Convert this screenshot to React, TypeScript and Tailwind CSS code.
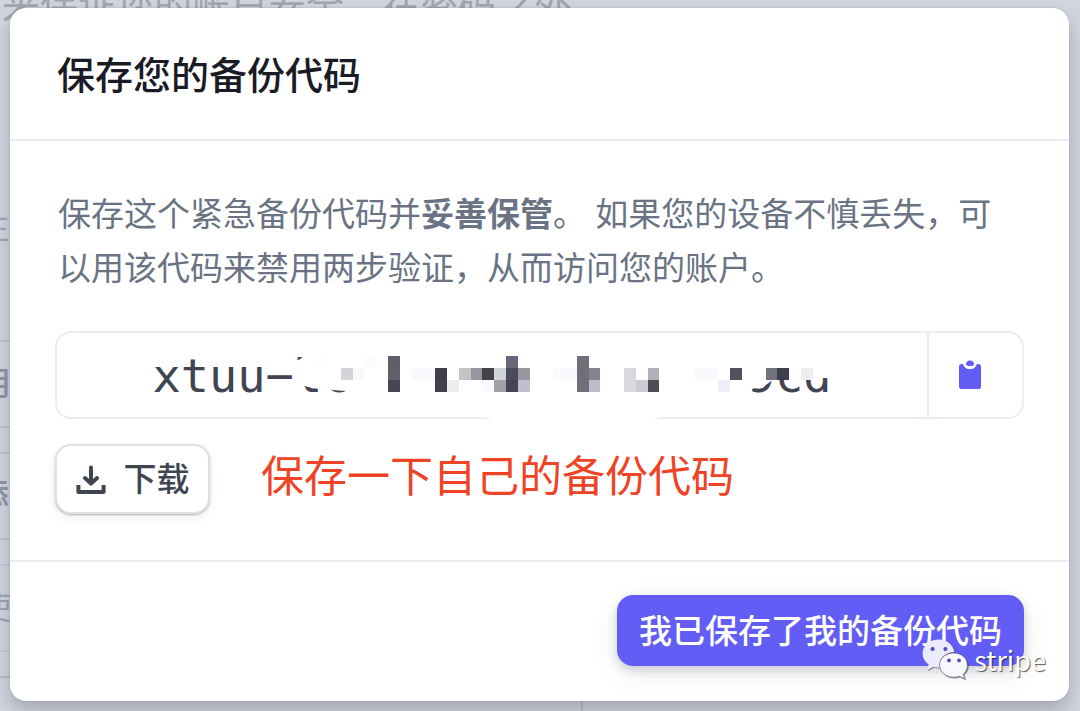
import { useState } from "react";

interface Cell {
  col: number;
  row: number;
  color: string;
}

const CELL = 11.8;

// Pixelated blocks that hide the middle of the code
const cells: Cell[] = [
  { col: -6, row: 0, color: "#fefefa" },
  { col: -4, row: 1, color: "#d3d4d8" },
  { col: -3, row: 1, color: "#fafafd" },
  { col: -2, row: 0, color: "#fafbfe" },
  { col: 0, row: 0, color: "#5f5e69" },
  { col: 0, row: 1, color: "#605f6a" },
  { col: 0, row: 2, color: "#474753" },
  { col: 2, row: 1, color: "#f9f9fe" },
  { col: 3, row: 1, color: "#f9f9fe" },
  { col: 4, row: 1, color: "#40404c" },
  { col: 4, row: 2, color: "#41414e" },
  { col: 5, row: 2, color: "#ededf0" },
  { col: 6, row: 1, color: "#c4c4c6" },
  { col: 7, row: 1, color: "#97959f" },
  { col: 8, row: 1, color: "#424248" },
  { col: 8, row: 2, color: "#f9f9fe" },
  { col: 9, row: 1, color: "#d3d4d7" },
  { col: 9, row: 2, color: "#a2a2a6" },
  { col: 10, row: 0, color: "#656878" },
  { col: 10, row: 1, color: "#4a4c5d" },
  { col: 10, row: 2, color: "#424555" },
  { col: 11, row: 1, color: "#9897a1" },
  { col: 11, row: 2, color: "#c0bfcb" },
  { col: 14, row: 1, color: "#f9fafe" },
  { col: 15, row: 1, color: "#f9fafe" },
  { col: 16, row: 0, color: "#706e79" },
  { col: 16, row: 1, color: "#706e79" },
  { col: 16, row: 2, color: "#706e79" },
  { col: 17, row: 1, color: "#85838f" },
  { col: 17, row: 2, color: "#bdbcc8" },
  { col: 20, row: 1, color: "#d8d9dd" },
  { col: 20, row: 2, color: "#d9d9de" },
  { col: 21, row: 2, color: "#cccbd4" },
  { col: 22, row: 1, color: "#b0b0b9" },
  { col: 22, row: 2, color: "#4f4e58" },
  { col: 26, row: 1, color: "#f8f8fd" },
  { col: 27, row: 1, color: "#f8f8fd" },
  { col: 28, row: 2, color: "#f0edf9" },
  { col: 29, row: 1, color: "#51515b" },
  { col: 32, row: 1, color: "#72737b" },
  { col: 33, row: 1, color: "#3d404c" },
  { col: 35, row: 1, color: "#edeef0" },
];

function CodeMask() {
  return (
    <svg
      aria-hidden="true"
      viewBox="0 0 700 90"
      className="pointer-events-none absolute top-0 left-1/2 h-[90px] w-[700px] -translate-x-1/2"
    >
      <path
        d="M154 30 Q160 23 172 17 H692 V45 H632 Q624 55 608 56 L560 78 Q520 82 500 89 H362 Q345 84 325 81 L250 64 Q215 61 205 58 Q188 57 166 54 L154 50Z"
        fill="#fff"
      />
      {cells.map((c) => (
        <rect
          key={`${c.col}:${c.row}`}
          x={246 + c.col * CELL}
          y={23 + c.row * 12}
          width={CELL}
          height={12}
          fill={c.color}
          shapeRendering="crispEdges"
        />
      ))}
    </svg>
  );
}

function ClipboardIcon() {
  return (
    <svg aria-hidden="true" viewBox="0 0 22 30" className="h-[30px] w-[22px]" fill="#625df5">
      <path d="M2.6 4 H3.2 C4.2 4 4.4 4.6 4.8 5.6 C5.6 8 8 9.2 11 9.2 C14 9.2 16.4 8 17.2 5.6 C17.6 4.6 17.8 4 18.8 4 H19.4 C21 4 22 5 22 6.6 V26.4 C22 28 21 29 19.4 29 H2.6 C1 29 0 28 0 26.4 V6.6 C0 5 1 4 2.6 4Z" />
      <path d="M11 0.4 C13.6 0.4 15 2.2 15 4 C15 5.4 13.6 6 11 6 C8.4 6 7 5.4 7 4 C7 2.2 8.4 0.4 11 0.4Z" />
    </svg>
  );
}

function DownloadIcon() {
  return (
    <svg aria-hidden="true" viewBox="0 0 30 30" className="size-[30px]" fill="none" stroke="#414552" strokeWidth="4" strokeLinejoin="round">
      <path d="M15 2.6 V17" strokeLinecap="round" />
      <path d="M9 13 L15 18.6 L21 13" strokeLinecap="round" />
      <path d="M2.4 20 V27 H27.6 V20" />
    </svg>
  );
}

function WeChatIcon() {
  return (
    <svg
      aria-hidden="true"
      viewBox="0 0 46 41"
      className="h-[41px] w-[46px] drop-shadow-[1px_1px_0px_rgba(0,0,0,0.4)]"
    >
      <path
        d="M17 0.6 C7.6 0.6 0.6 6.8 0.6 14.6 C0.6 19 2.8 22.8 6.6 25.4 L5 31.2 L11.4 27.8 C13.6 28.4 15.4 28.6 18.2 28.4 C16 20 23 13 32.6 13.2 C31 5.6 24.8 0.6 17 0.6Z"
        fill="#ecebfd"
      />
      <path
        d="M31.6 14 C23.6 14 17.6 19.4 17.6 26 C17.6 32.8 23.6 38.2 31.6 38.2 C33.6 38.2 35.6 37.8 37.2 37.2 L42.6 39.8 L41.2 35.2 C44 33 45.4 29.6 45.4 26 C45.4 19.4 39.6 14 31.6 14Z"
        fill="#f8f8ff"
        stroke="#55546b"
        strokeWidth="0.6"
      />
      <g fill="#4e4cb5">
        <circle cx="10.6" cy="10" r="2.1" />
        <circle cx="23.4" cy="10" r="2.1" />
        <circle cx="27" cy="21.4" r="1.9" />
        <circle cx="37" cy="21.4" r="1.9" />
      </g>
    </svg>
  );
}

// Dimmed settings page that stays visible round the edges of the dialog
function Backdrop() {
  return (
    <div
      aria-hidden="true"
      className="absolute inset-0 flex flex-col overflow-hidden bg-[#d3d6df] text-[33px] leading-[36px] text-[#a1a6b1]"
    >
      <div className="-mt-6 -ml-9 h-[234px] shrink-0 text-[38px] leading-[60px] whitespace-nowrap">
        <p>录来保证您的账户安全，在密码之外</p>
        <p>次</p>
      </div>
      <p className="-ml-6 h-[130px] shrink-0">注</p>
      <div className="flex w-[54%] flex-col gap-6 font-medium text-[#8f95a1]">
        <div className="flex h-[88px] items-center border-y-2 border-[#bfc3cc]">
          <span className="-ml-[22px]">用</span>
        </div>
        <div className="flex h-[88px] items-center border-y-2 border-[#bfc3cc]">
          <span className="-ml-6">添</span>
        </div>
        <div className="flex h-[88px] items-center border-y-2 border-[#c6c9d2] font-normal text-[#a1a6b1]">
          <span className="-ml-[22px]">使</span>
        </div>
        <div className="h-9 border-t-2 border-r-2 border-[#b9bdc6]" />
      </div>
    </div>
  );
}

export default function App() {
  const [code] = useState("xtuu−lc".padEnd(21, " ") + "9cd");

  return (
    <main className="relative min-h-screen pt-2 pr-[11px] pb-[10px] pl-[10px] font-['Liberation_Sans','Noto_Sans_CJK_SC',sans-serif]">
      <Backdrop />

      <section
        role="dialog"
        aria-labelledby="dialog-title"
        className="relative rounded-2xl bg-white shadow-[0_10px_20px_rgba(60,66,87,0.3),0_0_2px_rgba(60,66,87,0.25)]"
      >
        <header className="border-b-2 border-[#ebeef1] px-[47px] pt-[41px] pb-9">
          <h1 id="dialog-title" className="text-[38px] leading-[54px] font-medium text-[#1a1b25]">
            保存您的备份代码
          </h1>
        </header>

        <div className="px-[45px] pt-[47px] pb-[46px]">
          <p className="pr-3 pl-[3px] text-[33px] leading-[54px] text-[#6a7383]">
            保存这个紧急备份代码并<strong className="font-bold">妥善保管</strong>。 如果您的设备不慎丢失，可以用该代码来禁用两步验证，从而访问您的账户。
          </p>

          <div className="mt-[35px] flex h-[88px] rounded-2xl border-2 border-[#ebeef1]">
            <div className="relative min-w-0 flex-1">
              <input
                readOnly
                aria-label="备份代码"
                value={code}
                className="h-full w-full bg-transparent text-center font-['DejaVu_Sans_Mono',monospace] text-[47px] text-[#414552] outline-none"
              />
              <CodeMask />
            </div>
            <button
              aria-label="复制"
              onClick={() => navigator.clipboard?.writeText(code)}
              className="flex w-[95px] items-center justify-center border-l-2 border-[#ebeef1] pr-3"
            >
              <ClipboardIcon />
            </button>
          </div>

          <div className="mt-[25px] flex gap-[51px]">
            <button className="flex h-[70px] w-[155px] items-center justify-center gap-[18px] rounded-2xl bg-white pt-0.5 text-[33px] leading-[36px] font-medium text-[#414552] shadow-[0_0_0_2px_rgba(0,0,0,0.12)_inset,0_1px_2px_rgba(0,0,0,0.25),0_4px_10px_rgba(60,66,87,0.08)]">
              <DownloadIcon />
              下载
            </button>
            <p className="text-[43px] leading-[66px] text-[#ee4325]">保存一下自己的备份代码</p>
          </div>
        </div>

        <footer className="flex justify-end border-t-2 border-[#ebeef1] px-[45px] pt-[33px] pb-[35px]">
          <button className="h-[71px] rounded-2xl bg-[#625df5] px-[22px] pt-0.5 text-[33px] leading-[36px] font-medium text-white shadow-[0_4px_10px_rgba(60,66,87,0.2),0_8px_24px_rgba(60,66,87,0.1)]">
            我已保存了我的备份代码
          </button>
        </footer>
      </section>

      {/* Watermark */}
      <div className="absolute right-[34px] bottom-[31px] flex items-center gap-[6px]">
        <WeChatIcon />
        <span className="font-['Noto_Sans_CJK_SC',sans-serif] text-[27px] leading-[36px] text-white [text-shadow:1px_1px_1px_rgba(0,0,0,0.65)]">
          stripe
        </span>
      </div>
    </main>
  );
}
